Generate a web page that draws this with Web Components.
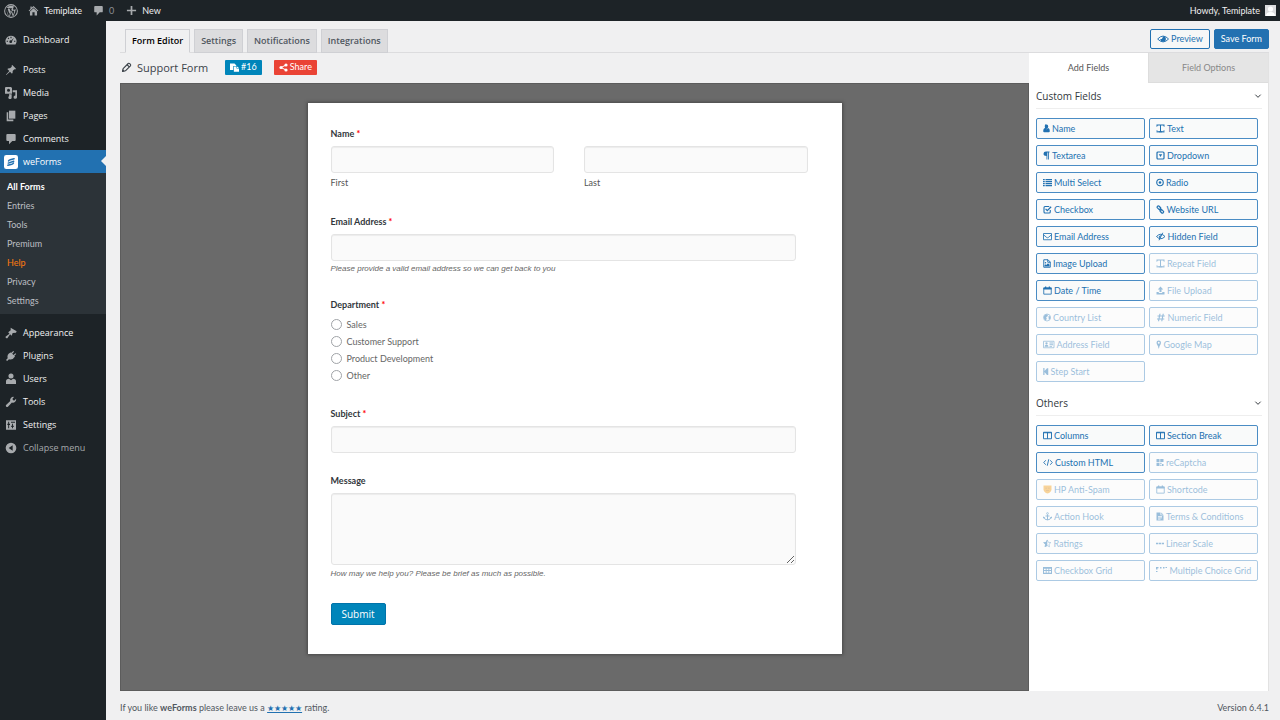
<!DOCTYPE html>
<html lang="en">
<head>
<meta charset="utf-8">
<meta name="viewport" content="width=device-width, initial-scale=1">
<title>weForms – Form Editor</title>
<style>
  html, body { margin: 0; height: 100%; }
  body { background: #f0f0f1; color: #3c434a; font: 9px/12px Lato, "Open Sans", sans-serif; }
</style>
</head>
<body>
<weforms-app></weforms-app>
<script>
/* Glyphs live in a box 18 units high; the first entry is the glyph's width in the same units. */
const ICONS = {
  wordpress: [18, '<circle cx="9" cy="9" r="8.2" fill="none" stroke="currentColor" stroke-width="1.3"/><path d="M2.6 6.2 6.4 16.2 8.6 9.8 7.3 6.4 6.2 6.1V5.4H10.4V6.1L9.3 6.4 11.9 13.8 13 10.2C13.5 8.3 11.7 7.3 11.7 5.8 11.7 4.6 12.6 3.8 13.6 3.9A7 7 0 0 0 3.2 5.3H5.7V6.1L4.8 6.3 7 13 8 10 9.7 9.3 7.5 16A7 7 0 0 0 11.3 15.7L9.2 9.9 14.9 6.3C15.2 8.6 13.6 12 12.4 15.2A7 7 0 0 1 5.2 15z"/>'],
  home: [18, '<path d="M9 1.5 17 9.3 15.8 10.4 9 4 2.2 10.4 1 9.3 4 6.4V2.5H6V4.4zM9 5.4 14.8 10.8V17H10.8V12H7.2V17H3.2V10.8z"/>'],
  comment: [18, '<path d="M3.5 1.5H14.5Q16 1.5 16 3V10.5Q16 12 14.5 12H11L6 17V12H3.5Q2 12 2 10.5V3Q2 1.5 3.5 1.5z"/>'],
  plus: [18, '<path d="M7.6 1.5H10.4V7.6H16.5V10.4H10.4V16.5H7.6V10.4H1.500V7.6H7.6z"/>'],
  avatar: [18, '<path fill="#dcdcde" d="M0 0H18V18H0z"/><g fill="#fff"><circle cx="9" cy="6.5" r="4.2"/><path d="M1.500 18Q2 11.500 9 11.500T16.500 18z"/></g>'],
  dashboard: [18, '<path fill-rule="evenodd" d="M9 2.500A8.300 8.300 0 0 1 15.700 15.700H2.300A8.300 8.300 0 0 1 9 2.500zM8.200 4.200V6.200H9.800V4.200zM4 6.400 5.400 7.800 6.400 6.800 5 5.400zM2.500 10V11.500H4.500V10zM13.500 10V11.500H15.500V10zM13.400 5.800 9.400 9.800A2 2 0 1 0 10.500 11z"/>'],
  pin: [18, '<path d="M11 1.500 16.500 7 15.300 8.200 14 7.800 11.500 10.500Q12 13 10.500 14.500L7.500 11.500 2 16.600 1.400 16 6.500 10.500 3.500 7.500Q5 6 7.500 6.500L10.200 4 9.800 2.700z"/>'],
  media: [18, '<path fill-rule="evenodd" d="M1 0H9L10.500 1.500V10H0V1zM5.300 2.500A2.300 2.300 0 1 0 5.300 7.100 2.300 2.300 0 0 0 5.300 2.500z"/><path d="M11.500 5H18V15A2.600 2.600 0 1 1 15.500 12.600V8H11.500zM6 11H10V15.500A2.500 2.500 0 1 1 8 13.200V13H6z"/>'],
  pages: [18, '<path d="M6 1H15.500V13H6z"/><path d="M4.800 3.500V14.300H12.500V16.800H2.500V3.500z"/>'],
  weforms: [18, '<rect width="18" height="18" rx="3" fill="#fff"/><path fill="none" stroke="#2271b1" stroke-width="1.900" stroke-linecap="round" d="M5.800 7.600Q6.200 6.400 8 6L13 4.800M5.500 10.400 12.500 8M5 13.200 10 12Q11.800 11.500 12.200 10.400"/>'],
  brush: [18, '<path d="M8.500 1 17.500 6.500 16.500 8.800 11.500 9 10 13 7.600 10.800 3.500 16.800Q.8 17.500 .8 14.600L6.700 10 4.800 8 8.500 5z"/>'],
  plug: [18, '<path d="M12.400 1.500 13.600 2.700 10.800 5.500 12.800 7.500 15.600 4.700 16.800 5.900 14 8.700 15 9.700Q11.500 15.500 6 13.800L3.200 16.600 1.500 14.900 4 12.300Q2.500 6.500 8.300 3.800L9.600 4.300z"/>'],
  users: [18, '<circle cx="9" cy="4.500" r="3.800"/><path d="M1.500 16.500V12.500Q1.500 9 6 8.800L9 11 12 8.800Q16.500 9 16.500 12.500V16.500z"/>'],
  wrench: [18, '<path d="M16.600 4.200A4.800 4.800 0 0 1 10.400 9.800L4.400 16.200A2 2 0 0 1 1.600 13.500L7.900 7.500A4.800 4.800 0 0 1 13.500 1.400L11.200 4 12 6.200 14.200 6.800z"/>'],
  sliders: [18, '<path fill-rule="evenodd" d="M1.500 2H16.500V16H1.500zM4.800 4V7H3.500V9H4.800V14H6.200V9H7.500V7H6.200V4zM9 4V5.500H15V4zM10.500 7V10H9.300V12H10.500V14H11.900V12H13.100V10H11.900V7z"/>'],
  collapse: [18, '<path fill-rule="evenodd" d="M9 1A8 8 0 1 1 9 17 8 8 0 0 1 9 1zM11.500 4.800 5.500 9 11.500 13.200z"/>'],
  pencil: [18, '<path fill="none" stroke="currentColor" stroke-width="1.900" stroke-linejoin="round" d="M2.500 15.500 3.500 10.800 11.800 2.500Q13 1.500 14.300 2.800L15.300 3.800Q16.400 5 15.400 6.200L7.200 14.400zM10 4.500 13.500 8"/><path d="M2 16 2.900 12 6 15z"/>'],
  paste: [18, '<path fill-rule="evenodd" d="M0 1H9L12.500 4.500V6H6.500V14H0z"/><path d="M7.700 7.200H13V11.200H18V17.500H7.700zM14 6.800 18 10.200H14z"/>'],
  share: [18, '<circle cx="14" cy="4" r="3.200"/><circle cx="14" cy="14" r="3.200"/><circle cx="4" cy="9" r="3.200"/><path fill="none" stroke="currentColor" stroke-width="2" d="M14 4 4 9 14 14"/>'],
  eye: [22, '<path fill="none" stroke="currentColor" stroke-width="1.700" d="M1.200 9Q11-1.500 20.800 9 11 19.500 1.200 9z"/><path d="M11 4A5 5 0 1 1 6 9Q8 9.500 9 8.500T11 4z"/>'],
  chevron: [18, '<path fill="none" stroke="currentColor" stroke-width="2.200" d="M3 6 9 12 15 6"/>'],
  user: [14, '<path d="M7 1Q10.500 1 10.500 5T7 9.800 3.500 5 7 1zM3.600 8.200Q7 12.500 10.400 8.200 13.600 9 13.600 14 13.600 16.500 11.500 16.500H2.500Q.4 16.500 .4 14 .4 9 3.600 8.200z"/>'],
  textheight: [18, '<path d="M1 1H17V5.500H15.700Q15.500 3 13.500 3H10V14.500L12 15V16.500H6V15L8 14.500V3H4.500Q2.500 3 2.300 5.500H1z"/><path d="M1 12.500H3V14H15V12.500H17V17H1z" opacity=".8"/>'],
  paragraph: [14, '<path d="M6 1H13V3H12V17H10.300V3H8.700V17H7V10Q1 10 1 5.500 1 1 6 1z"/>'],
  caretbox: [18, '<rect x="2" y="2" width="14" height="14" rx="2" fill="none" stroke="currentColor" stroke-width="2.400"/><path d="M5.500 6.500H12.500L9 12z"/>'],
  list: [18, '<path d="M0 2H3.500V4.600H0zM5 2H18V4.600H5zM0 6H3.500V8.600H0zM5 6H18V8.600H5zM0 10H3.500V12.600H0zM5 10H18V12.600H5zM0 14H3.500V16.500H0zM5 14H18V16.500H5z"/>'],
  dotcircle: [16, '<circle cx="8" cy="9" r="6.500" fill="none" stroke="currentColor" stroke-width="2.300"/><circle cx="8" cy="9" r="2.600"/>'],
  check: [18, '<path fill="none" stroke="currentColor" stroke-width="2.200" d="M14.500 10V14Q14.500 16 12.500 16H4Q2 16 2 14V5Q2 3 4 3H12.500"/><path d="M4.300 8.500 6 6.800 8.600 9.300 15.400 2.500 17.200 4.300 8.600 13z"/>'],
  link: [17, '<g fill="none" stroke="currentColor" stroke-width="2.400"><rect x="1.800" y="3" width="8" height="4.800" rx="2.300" transform="rotate(45 5.800 5.400)"/><rect x="7.600" y="10.200" width="8" height="4.800" rx="2.300" transform="rotate(45 11.600 12.600)"/><path d="M7 7.500 11 11.500"/></g>'],
  envelope: [18, '<path fill="none" stroke="currentColor" stroke-width="1.700" d="M1 3H17V15.500H1zM1 5.500 7.500 11Q9 12 10.500 11L17 5.500"/>'],
  eyeslash: [19, '<path fill="none" stroke="currentColor" stroke-width="1.900" d="M1 9Q9.500 0 18 9 9.500 18 1 9zM13.500 1.500 6 16.500"/><path d="M10 5 5.500 9.500 8 13.500z"/>'],
  fileimage: [16, '<path fill="none" stroke="currentColor" stroke-width="1.900" d="M1.500 1.500H10L14.500 6V16.500H1.500zM9.500 1.500V6.500H14.500"/><path d="M3 15V12.500L5 10.500 6.500 12 10 8.500 13 11.500V15z"/><circle cx="5" cy="7.500" r="1.500"/>'],
  upload: [18, '<path d="M9 1 14.500 7H11V12H7V7H3.500zM1 12H5.500V13.800H12.500V12H17V17H1z"/>'],
  calendar: [18, '<path fill="none" stroke="currentColor" stroke-width="1.700" d="M1.500 4H16.500V16.300H1.500z"/><path d="M1 3H17V7H1zM4 1H6.500V4H4zM11.500 1H14V4H11.500z"/>'],
  globe: [16, '<circle cx="8" cy="9" r="7" fill="none" stroke="currentColor" stroke-width="1.500"/><path d="M1.500 7Q3 3 7.500 2.500L10 4 8.500 7.500 6 8 7.500 10.500 6 15Q1 13 1.500 7zM11 6 15 7 14.500 12 11.500 13.500z"/>'],
  hash: [19, '<path fill="none" stroke="currentColor" stroke-width="2.400" d="M8 1.500 5 16.500M14.500 1.500 11.500 16.500M3 6H17.500M2 12H16.500"/>'],
  idcard: [23, '<path fill="none" stroke="currentColor" stroke-width="1.600" d="M1 2.500H22V15.500H1z"/><circle cx="7" cy="6.800" r="2.300"/><path d="M3 13.500Q3 9.500 7 9.500T11 13.500zM13 5H20V7H13zM13 8.500H20V10.500H13zM13 12H18V13.500H13z"/>'],
  marker: [11, '<path fill-rule="evenodd" d="M5.500 1A4.500 4.500 0 0 1 10 5.500Q10 8 7 12.500L6 17H5L4 12.500Q1 8 1 5.500A4.500 4.500 0 0 1 5.500 1zM5.500 3.600A1.900 1.900 0 1 0 5.500 7.400 1.900 1.900 0 0 0 5.500 3.600z"/>'],
  step: [11, '<path d="M.5 2H3V8L8 2.500H10.500V16H8L3 10V16H.5z"/>'],
  columns: [18, '<path fill="none" stroke="currentColor" stroke-width="1.900" d="M1 2.500H17V15.500H1zM9 2.500V15.500M1 3.500H17"/>'],
  code: [20, '<path fill="none" stroke="currentColor" stroke-width="1.800" d="M5.500 4.500 1.500 9 5.500 13.500M14.500 4.500 18.500 9 14.500 13.500M11.500 2.500 8.500 15.500"/>'],
  qr: [16, '<path d="M1 2H7V8H1zM8.500 2H15V8H8.500zM1 9.500H7V16H1zM8.500 9.500H11V12H8.500zM12 12H15V16H12zM8.500 13.500H11V16H8.500z"/>'],
  honeypot: [18, '<path fill="#f0a020" d="M1 1H17V9Q16 15 9 17 2 15 1 9z"/><path fill="#c98524" d="M5 5H7.500V8H5zM10.500 5H13V8H10.500zM6 10H12V12H6z"/>'],
  anchor: [18, '<path fill="none" stroke="currentColor" stroke-width="2" d="M9 5V16M5 8H13M1.800 10.500Q3 15.800 9 15.800T16.200 10.500"/><circle cx="9" cy="3" r="1.800" fill="none" stroke="currentColor" stroke-width="1.500"/><path d="M0 13V9L4.500 11zM18 13V9L13.500 11z"/>'],
  file: [16, '<path fill-rule="evenodd" d="M1 1H9V6.500H15V17H1zM4 8.500V10H12V8.500zM4 11V12.500H12V11zM4 13.500V15H9V13.500zM10.500 1 15 5.300H10.500z"/>'],
  star: [17, '<path fill="none" stroke="currentColor" stroke-width="1.300" d="M8.500 2 10.600 6.600 15.700 7.200 12 10.600 13 15.500 8.500 13.200 4 15.500 5 10.600 1.300 7.200 6.400 6.600z"/><path d="M8.500 1V13.500L3.500 16.200 4.500 10.700.6 7 6 6.200z"/>'],
  dots: [16, '<path d="M0 7.500H4.500V10.500H0zM5.700 7.500H10.200V10.500H5.700zM11.500 7.500H16V10.500H11.500z"/>'],
  table: [18, '<path fill-rule="evenodd" d="M0 2H18V16H0zM2 5.500V8H5.500V5.500zM7.200 5.500V8H10.800V5.500zM12.500 5.500V8H16V5.500zM2 10V13.500H5.500V10zM7.200 10V13.500H10.800V10zM12.500 10V13.500H16V10z"/>'],
  braille: [23, '<path d="M0 2H5V4.500H3V7H0zM8 2H11V5H8zM14 2H17V5H14zM19 2H22V4H19zM0 10H3V12H0z"/>']
};

class BaseElement extends HTMLElement {
  constructor() { super(); this.attachShadow({ mode: 'open' }); }
  connectedCallback() { this.shadowRoot.innerHTML = `<style>*{box-sizing:border-box}${this.styles()}</style>${this.markup()}`; }
  attr(name) { return this.getAttribute(name) || ''; }
}

customElements.define('ui-icon', class extends BaseElement {
  styles() { return `:host{display:inline-flex;flex:none} svg{display:block;height:var(--icon-size,9px);fill:currentColor}`; }
  markup() {
    const [w, body] = ICONS[this.attr('name')];
    return `<svg viewBox="0 0 ${w} 18" aria-hidden="true">${body}</svg>`;
  }
});

customElements.define('admin-bar', class extends BaseElement {
  styles() { return `
    :host{display:flex;justify-content:space-between;align-items:center;height:21px;padding:0 4px;background:#1d2327}
    nav{display:flex;align-items:center}
    a{display:flex;align-items:center;color:#f0f0f1;text-decoration:none;gap:5px}
    ui-icon{color:#a7aaad;--icon-size:11px}
    .logo{--icon-size:14px;margin-right:10px}
    .site{margin-right:11px}.count{color:#8c8f94;margin-right:12px}`; }
  markup() { return `
    <nav aria-label="Toolbar">
      <a href="#"><ui-icon class="logo" name="wordpress"></ui-icon></a>
      <a href="#" class="site"><ui-icon name="home"></ui-icon>Temiplate</a>
      <a href="#" class="count"><ui-icon name="comment"></ui-icon>0</a>
      <a href="#"><ui-icon name="plus"></ui-icon>New</a>
    </nav>
    <a href="#">Howdy, Temiplate<ui-icon name="avatar"></ui-icon></a>`; }
});

customElements.define('menu-item', class extends BaseElement {
  styles() { return `
    :host{display:block}
    a{position:relative;display:flex;align-items:center;gap:6px;height:23px;padding-left:5px;color:#f0f0f1;text-decoration:none}
    ui-icon{color:#a7aaad;--icon-size:12px}
    :host([muted]) a{color:#a7aaad}
    :host([current]) a{background:#2271b1;color:#fff}
    :host([current]) a::after{content:"";position:absolute;right:0;top:6px;border:5px solid transparent;border-right-color:#f0f0f1;border-left:0}
    :host([current]) a{padding-left:4px;gap:5px}
    :host([current]) ui-icon{--icon-size:14px}`; }
  markup() { return `<a href="#"><ui-icon name="${this.attr('icon')}"></ui-icon><slot></slot></a>`; }
});

customElements.define('sub-menu', class extends BaseElement {
  styles() { return `
    :host{display:block;background:#2c3338;padding:4px 0;font-family:Lato,sans-serif}
    ul{list-style:none;margin:0;padding:0}
    a{display:block;padding-left:7px;line-height:19px;color:#bcbfc3;text-decoration:none}
    .on{color:#fff;font-weight:700}.help{color:#ff7a0f}`; }
  markup() { return `<ul>
    <li><a href="#" class="on">All Forms</a></li><li><a href="#">Entries</a></li><li><a href="#">Tools</a></li>
    <li><a href="#">Premium</a></li><li><a href="#" class="help">Help</a></li><li><a href="#">Privacy</a></li>
    <li><a href="#">Settings</a></li></ul>`; }
});

customElements.define('side-menu', class extends BaseElement {
  styles() { return `
    :host{display:block;background:#1d2327;padding-top:7px;font-family:"Open Sans",sans-serif}
    nav{display:flex;flex-direction:column}
    .gap{margin-top:7px}`; }
  markup() { return `<nav aria-label="Main menu">
    <menu-item icon="dashboard">Dashboard</menu-item>
    <menu-item icon="pin" class="gap">Posts</menu-item>
    <menu-item icon="media">Media</menu-item>
    <menu-item icon="pages">Pages</menu-item>
    <menu-item icon="comment">Comments</menu-item>
    <menu-item icon="weforms" current>weForms</menu-item>
    <sub-menu></sub-menu>
    <menu-item icon="brush" class="gap">Appearance</menu-item>
    <menu-item icon="plug">Plugins</menu-item>
    <menu-item icon="users">Users</menu-item>
    <menu-item icon="wrench">Tools</menu-item>
    <menu-item icon="sliders">Settings</menu-item>
    <menu-item icon="collapse" muted>Collapse menu</menu-item></nav>`; }
});

customElements.define('editor-tabs', class extends BaseElement {
  styles() { return `
    :host{display:flex;justify-content:space-between;align-items:flex-start;border-bottom:1px solid #dcdcde;padding-left:5px;height:24px}
    nav,.actions{display:flex;gap:4px}
    nav a{height:24px;padding:0 6px;border:1px solid #cfd0d4;background:#dcdcde;color:#50575e;font-family:"Open Sans",sans-serif;font-weight:600;line-height:22px;text-decoration:none}
    nav a[aria-current]{background:#f0f0f1;border-bottom-color:#f0f0f1;color:#000}
    button{display:flex;align-items:center;gap:2px;height:20px;padding:0 6px;border:1px solid #2271b1;border-radius:2px;background:#f6f7f7;color:#2271b1;font:inherit}
    ui-icon{--icon-size:10px}
    button.primary{background:#2271b1;color:#fff}`; }
  markup() { return `
    <nav aria-label="Form sections"><a href="#" aria-current="page">Form Editor</a><a href="#">Settings</a><a href="#">Notifications</a><a href="#">Integrations</a></nav>
    <div class="actions"><button type="button"><ui-icon name="eye"></ui-icon>Preview</button><button type="button" class="primary">Save Form</button></div>`; }
});

customElements.define('form-title', class extends BaseElement {
  styles() { return `
    :host{display:flex;align-items:center;height:30px;padding:0 0 2px 1px}
    h1{margin:0 17px 0 5px;font:500 11px/16px "Open Sans",sans-serif;padding-top:2px}
    button{display:flex;align-items:center;gap:2px;height:15px;padding:0 5px;border:0;border-radius:1px;background:#0085ba;color:#fff;font:inherit}
    button.share{background:#ea4335;margin-left:12px}
    ui-icon{--icon-size:9px}.edit{--icon-size:11px}`; }
  markup() { return `
    <ui-icon class="edit" name="pencil"></ui-icon><h1>Support Form</h1>
    <button type="button"><ui-icon name="paste"></ui-icon>#16</button>
    <button type="button" class="share"><ui-icon name="share"></ui-icon>Share</button>`; }
});

const FIELD_CSS = `
  .caption{display:block;line-height:13px;font-weight:700;color:#32373c;padding:0}
  .req{color:#f00}
  input[type=text],input[type=email],textarea{display:block;width:100%;height:27px;margin:0;border:1px solid #e4e4e4;border-radius:3px;background:#fafafa;box-shadow:inset 0 1px 1px rgba(0,0,0,.06);font:inherit}
  .hint{margin:0;font:italic 8px/12px "Liberation Sans",Arial,sans-serif;color:#666}`;

customElements.define('text-field', class extends BaseElement {
  styles() { return `:host{display:block;margin-right:22px} ${FIELD_CSS}
    .caption{margin-bottom:6px}
    textarea{height:72px;resize:vertical}
    .hint{margin-top:2px} textarea + .hint{margin-top:3px}`; }
  markup() {
    const type = this.attr('type') || 'text';
    const req = this.hasAttribute('required') ? ' <span class="req">*</span>' : '';
    const control = type === 'textarea' ? '<textarea id="f"></textarea>' : `<input id="f" type="${type}">`;
    const hint = this.attr('hint') ? `<p class="hint">${this.attr('hint')}</p>` : '';
    return `<label class="caption" for="f">${this.attr('label')}${req}</label>${control}${hint}`;
  }
});

customElements.define('name-field', class extends BaseElement {
  styles() { return `:host{display:block;margin-right:10px} ${FIELD_CSS}
    fieldset{border:0;margin:0;padding:0;min-width:0} legend{margin-bottom:6px}
    .cols{display:grid;grid-template-columns:1fr 1fr;gap:30px}
    label.sub{display:block;margin-top:4px;line-height:12px;color:#555}`; }
  markup() { return `<fieldset><legend class="caption">Name <span class="req">*</span></legend>
    <div class="cols"><div><input id="first" type="text"><label class="sub" for="first">First</label></div>
    <div><input id="last" type="text"><label class="sub" for="last">Last</label></div></div></fieldset>`; }
});

customElements.define('radio-field', class extends BaseElement {
  styles() { return `:host{display:block} ${FIELD_CSS}
    fieldset{border:0;margin:0;padding:0} legend{margin-bottom:5px}
    label{display:flex;align-items:center;gap:5px;height:17px;color:#666}
    input{appearance:none;width:11px;height:11px;margin:0;border:1px solid #a0a3a7;border-radius:50%;background:#fff}`; }
  markup() { return `<fieldset><legend class="caption">Department <span class="req">*</span></legend>
    ${['Sales', 'Customer Support', 'Product Development', 'Other'].map(t => `<label><input type="radio" name="department">${t}</label>`).join('')}</fieldset>`; }
});

customElements.define('form-preview', class extends BaseElement {
  styles() { return `
    :host{display:flex;justify-content:center;align-items:flex-start;background:#6a6a6a;border:1px solid #5c5c5c;padding:19px 20px 32px}
    form{display:flex;flex-direction:column;width:100%;max-width:534px;padding:24px 24px 29px 23px;background:#fff;box-shadow:0 0 3px 1px #484848}
    .after-name{margin-top:26px}
    .space{margin-top:23px}
    .after-text{margin-top:21px}
    button{align-self:flex-start;height:22px;margin-top:23px;padding:0 10px;border:1px solid #0073aa;border-radius:2px;background:#0085ba;color:#fff;font:400 10px/14px "Open Sans",sans-serif}`; }
  markup() { return `<form>
    <name-field></name-field>
    <text-field class="after-name" type="email" label="Email Address" required hint="Please provide a valid email address so we can get back to you"></text-field>
    <radio-field class="space"></radio-field>
    <text-field class="space" label="Subject" required></text-field>
    <text-field class="after-text" type="textarea" label="Message" hint="How may we help you? Please be brief as much as possible."></text-field>
    <button type="button">Submit</button></form>`; }
});

customElements.define('field-button', class extends BaseElement {
  styles() { return `
    :host{display:block;min-width:0}
    button{display:flex;align-items:center;gap:2px;width:100%;height:21px;padding:0 6px;border:1px solid #4a8cc4;border-radius:2px;background:#f9fafa;color:#2271b1;font:inherit;white-space:nowrap}
    :host([pro]) button{opacity:.45}`; }
  markup() { return `<button type="button"><ui-icon name="${this.attr('icon')}"></ui-icon><slot></slot></button>`; }
});

customElements.define('field-group', class extends BaseElement {
  styles() { return `
    :host{display:block}
    h2{display:flex;justify-content:space-between;align-items:center;height:26px;margin:0 6px 9px 7px;border-bottom:1px solid #eee;font:500 10px/14px "Open Sans",sans-serif;color:#32373c}
    ui-icon{--icon-size:8px}
    .grid{display:grid;grid-template-columns:repeat(2,minmax(0,1fr));gap:6px 4px;padding:0 10px 0 7px}`; }
  markup() { return `<h2>${this.attr('heading')}<ui-icon name="chevron"></ui-icon></h2><div class="grid"><slot></slot></div>`; }
});

customElements.define('field-panel', class extends BaseElement {
  styles() { return `
    :host{display:block;background:#fff;border-right:1px solid #e2e2e2}
    nav{display:flex}
    nav a{flex:1;height:30px;line-height:30px;text-align:center;color:#555;text-decoration:none}
    nav a + a{background:#e5e5e5;color:#888;border-left:1px solid #ddd;border-bottom:1px solid #ddd}
    .next{margin-top:8px}`; }
  markup() {
    const build = list => list.map(([icon, text, pro]) => `<field-button icon="${icon}"${pro ? ' pro' : ''}>${text}</field-button>`).join('');
    const custom = [['user','Name'],['textheight','Text'],['paragraph','Textarea'],['caretbox','Dropdown'],['list','Multi Select'],['dotcircle','Radio'],
      ['check','Checkbox'],['link','Website URL'],['envelope','Email Address'],['eyeslash','Hidden Field'],['fileimage','Image Upload'],['textheight','Repeat Field',1],
      ['calendar','Date / Time'],['upload','File Upload',1],['globe','Country List',1],['hash','Numeric Field',1],['idcard','Address Field',1],['marker','Google Map',1],['step','Step Start',1]];
    const others = [['columns','Columns'],['columns','Section Break'],['code','Custom HTML'],['qr','reCaptcha',1],['honeypot','HP Anti-Spam',1],['calendar','Shortcode',1],
      ['anchor','Action Hook',1],['file','Terms &amp; Conditions',1],['star','Ratings',1],['dots','Linear Scale',1],['table','Checkbox Grid',1],['braille','Multiple Choice Grid',1]];
    return `<nav aria-label="Field panel"><a href="#" aria-current="page">Add Fields</a><a href="#">Field Options</a></nav>
      <field-group heading="Custom Fields">${build(custom)}</field-group>
      <field-group class="next" heading="Others">${build(others)}</field-group>`;
  }
});

customElements.define('page-footer', class extends BaseElement {
  styles() { return `
    :host{display:flex;justify-content:space-between;align-items:center;height:29px;padding-top:4px;color:#50575e}
    p{margin:0} strong{font-weight:700} a{color:#2271b1;font-size:8px;text-decoration-skip-ink:none}`; }
  markup() { return `<p>If you like <strong>weForms</strong> please leave us a <a href="#">★★★★★</a> rating.</p><p>Version 6.4.1</p>`; }
});

customElements.define('weforms-app', class extends BaseElement {
  styles() { return `
    :host{display:grid;grid-template:auto 1fr / 106px 1fr;min-height:100vh}
    admin-bar{grid-column:1 / -1}
    main{display:flex;flex-direction:column;padding:8px 11px 0 14px;min-width:0}
    .work{flex:1;display:grid;grid-template-columns:1fr 240px}
    .left{display:flex;flex-direction:column;min-width:0}
    form-preview{flex:1}`; }
  markup() { return `<admin-bar></admin-bar><side-menu></side-menu>
    <main><editor-tabs></editor-tabs>
      <div class="work"><div class="left"><form-title></form-title><form-preview></form-preview></div><field-panel></field-panel></div>
      <page-footer></page-footer></main>`; }
});
</script>
</body>
</html>
